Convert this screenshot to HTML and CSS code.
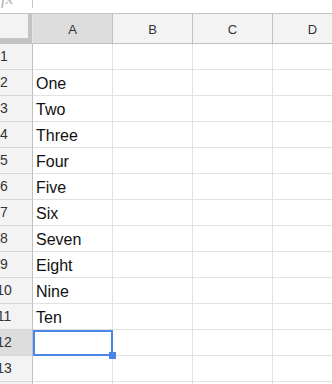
FILE: index.html
```html
<!DOCTYPE html>
<html lang="en">
<head>
  <meta charset="UTF-8">
  <title>Sheet</title>
  <link rel="stylesheet" href="styles.css">
</head>
<body>
  <div class="formula-bar">
    <span class="fx">fx</span>
    <span class="fx-sep"></span>
  </div>

  <div class="sheet">
    <div class="corner"></div>
    <div class="col-head active">A</div>
    <div class="col-head">B</div>
    <div class="col-head">C</div>
    <div class="col-head">D</div>

    <div class="row-head">1</div><div class="cell"></div><div class="cell"></div><div class="cell"></div><div class="cell"></div>
    <div class="row-head">2</div><div class="cell">One</div><div class="cell"></div><div class="cell"></div><div class="cell"></div>
    <div class="row-head">3</div><div class="cell">Two</div><div class="cell"></div><div class="cell"></div><div class="cell"></div>
    <div class="row-head">4</div><div class="cell">Three</div><div class="cell"></div><div class="cell"></div><div class="cell"></div>
    <div class="row-head">5</div><div class="cell">Four</div><div class="cell"></div><div class="cell"></div><div class="cell"></div>
    <div class="row-head">6</div><div class="cell">Five</div><div class="cell"></div><div class="cell"></div><div class="cell"></div>
    <div class="row-head">7</div><div class="cell">Six</div><div class="cell"></div><div class="cell"></div><div class="cell"></div>
    <div class="row-head">8</div><div class="cell">Seven</div><div class="cell"></div><div class="cell"></div><div class="cell"></div>
    <div class="row-head">9</div><div class="cell">Eight</div><div class="cell"></div><div class="cell"></div><div class="cell"></div>
    <div class="row-head">10</div><div class="cell">Nine</div><div class="cell"></div><div class="cell"></div><div class="cell"></div>
    <div class="row-head">11</div><div class="cell">Ten</div><div class="cell"></div><div class="cell"></div><div class="cell"></div>
    <div class="row-head active">12</div><div class="cell selected"><span class="handle"></span></div><div class="cell"></div><div class="cell"></div><div class="cell"></div>
    <div class="row-head">13</div><div class="cell"></div><div class="cell"></div><div class="cell"></div><div class="cell"></div>
    <div class="row-head"></div><div class="cell"></div><div class="cell"></div><div class="cell"></div><div class="cell"></div>
  </div>
</body>
</html>
```

FILE: styles.css
```css
html, body {
  margin: 0;
  padding: 0;
  overflow: hidden;
  background: #fff;
}
body {
  font-family: "Liberation Sans", Arial, sans-serif;
  width: 332px;
  height: 384px;
}
.formula-bar {
  height: 13px;
  border-bottom: 1px solid #c4c4c4;
  display: flex;
  align-items: flex-start;
  overflow: hidden;
}
.fx {
  width: 32px;
  margin-top: -11px;
  font-family: "Liberation Serif", serif;
  font-style: italic;
  font-size: 17px;
  line-height: 20px;
  color: #b0b0b0;
  padding-left: 1px;
  box-sizing: border-box;
}
.fx-sep {
  width: 1px;
  height: 8px;
  background: #c8c8c8;
}
.sheet {
  display: grid;
  grid-template-columns: 33px repeat(4, 80px);
  grid-template-rows: 30px;
  grid-auto-rows: 26px;
  width: 332px;
  overflow: hidden;
}
.sheet > div {
  box-sizing: border-box;
}
.corner {
  background: #f3f3f3;
  border-right: 1px solid #e6e6e6;
  border-bottom: 1px solid #c0c0c0;
  box-shadow: inset -4px -5px 0 #c4c4c4;
}
.col-head {
  background: #f3f3f3;
  border-right: 1px solid #c0c0c0;
  border-bottom: 1px solid #c0c0c0;
  display: flex;
  align-items: center;
  justify-content: center;
  font-size: 13px;
  color: #333;
  padding-top: 1px;
}
.col-head.active, .row-head.active {
  background: #dddddd;
}
.row-head {
  background: #f3f3f3;
  border-right: 1px solid #c0c0c0;
  border-bottom: 1px solid #d6d6d6;
  font-size: 14px;
  color: #333;
  padding-right: 24px;
  line-height: 25px;
  white-space: nowrap;
  display: flex;
  justify-content: center;
}
.cell {
  border-right: 1px solid #e2e2e2;
  border-bottom: 1px solid #e2e2e2;
  display: flex;
  align-items: flex-end;
  padding: 0 0 2px 3px;
  font-size: 16px;
  line-height: 18px;
  color: #111;
  white-space: nowrap;
}
.cell.selected {
  position: relative;
}
.cell.selected::after {
  content: "";
  position: absolute;
  top: 0;
  left: 0;
  right: -1px;
  bottom: -1px;
  border: 2px solid #4a86e8;
}
.handle {
  position: absolute;
  right: -4px;
  bottom: -4px;
  width: 7px;
  height: 7px;
  background: #4a86e8;
  z-index: 1;
}
```
